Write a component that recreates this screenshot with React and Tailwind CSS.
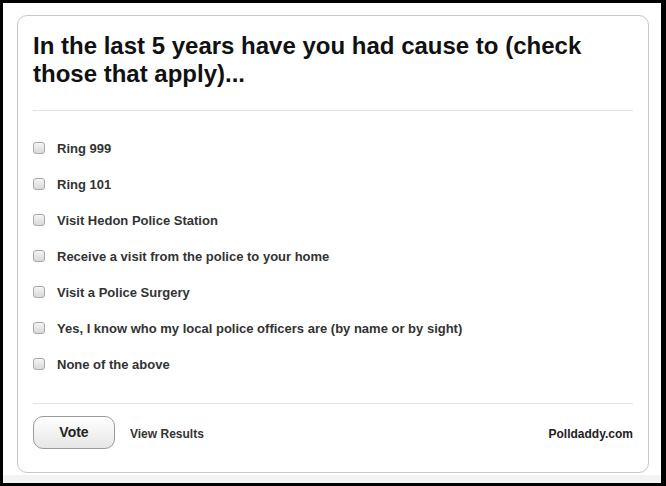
import React from "react";

const options = [
  "Ring 999",
  "Ring 101",
  "Visit Hedon Police Station",
  "Receive a visit from the police to your home",
  "Visit a Police Surgery",
  "Yes, I know who my local police officers are (by name or by sight)",
  "None of the above",
];

export default function App() {
  return (
    <div className="w-[666px] h-[486px] bg-black pt-[3px] pl-[3px] pr-[5px] pb-[3px] font-['Liberation_Sans',Arial,sans-serif]">
      <div className="h-full bg-[#f3f3f3] flex flex-col">
        <div className="bg-white pt-[12px] pl-[14px] pr-[12px] pb-[2px]">
          {/* poll card */}
          <div className="border border-[#c8c8c8] rounded-[10px] bg-white px-[15px] pt-[16px] pb-[23px]">
            <h1 className="text-[24px] leading-[28px] font-bold text-[#111] pr-4">
              In the last 5 years have you had cause to (check those that apply)...
            </h1>
            <div className="h-px bg-[#e2e2e2] mt-[22px]" />
            <div className="pt-[20px] pb-[20px] flex flex-col">
              {options.map((o) => (
                <label key={o} className="flex items-center h-[36px]">
                  <span className="w-[12px] h-[12px] rounded-[3px] border border-[#a8a8a8] bg-gradient-to-b from-[#f4f4f4] to-[#d9d9d9] mb-[3px]" />
                  <span className="ml-[12px] text-[13px] font-bold text-[#333]">{o}</span>
                </label>
              ))}
            </div>
            <div className="h-px bg-[#e2e2e2]" />
            <div className="flex items-center mt-[11px] pt-[1px]">
              <button className="w-[82px] h-[33px] rounded-[10px] border border-[#9a9a9a] bg-gradient-to-b from-white to-[#e6e6e6] text-[14px] font-bold text-[#222] pb-[1px]">
                Vote
              </button>
              <span className="ml-[15px] mt-[2px] text-[12px] font-bold text-[#333]">View Results</span>
              <span className="ml-auto mt-[2px] text-[12px] font-bold text-[#222]">Polldaddy.com</span>
            </div>
          </div>
        </div>
      </div>
    </div>
  );
}
